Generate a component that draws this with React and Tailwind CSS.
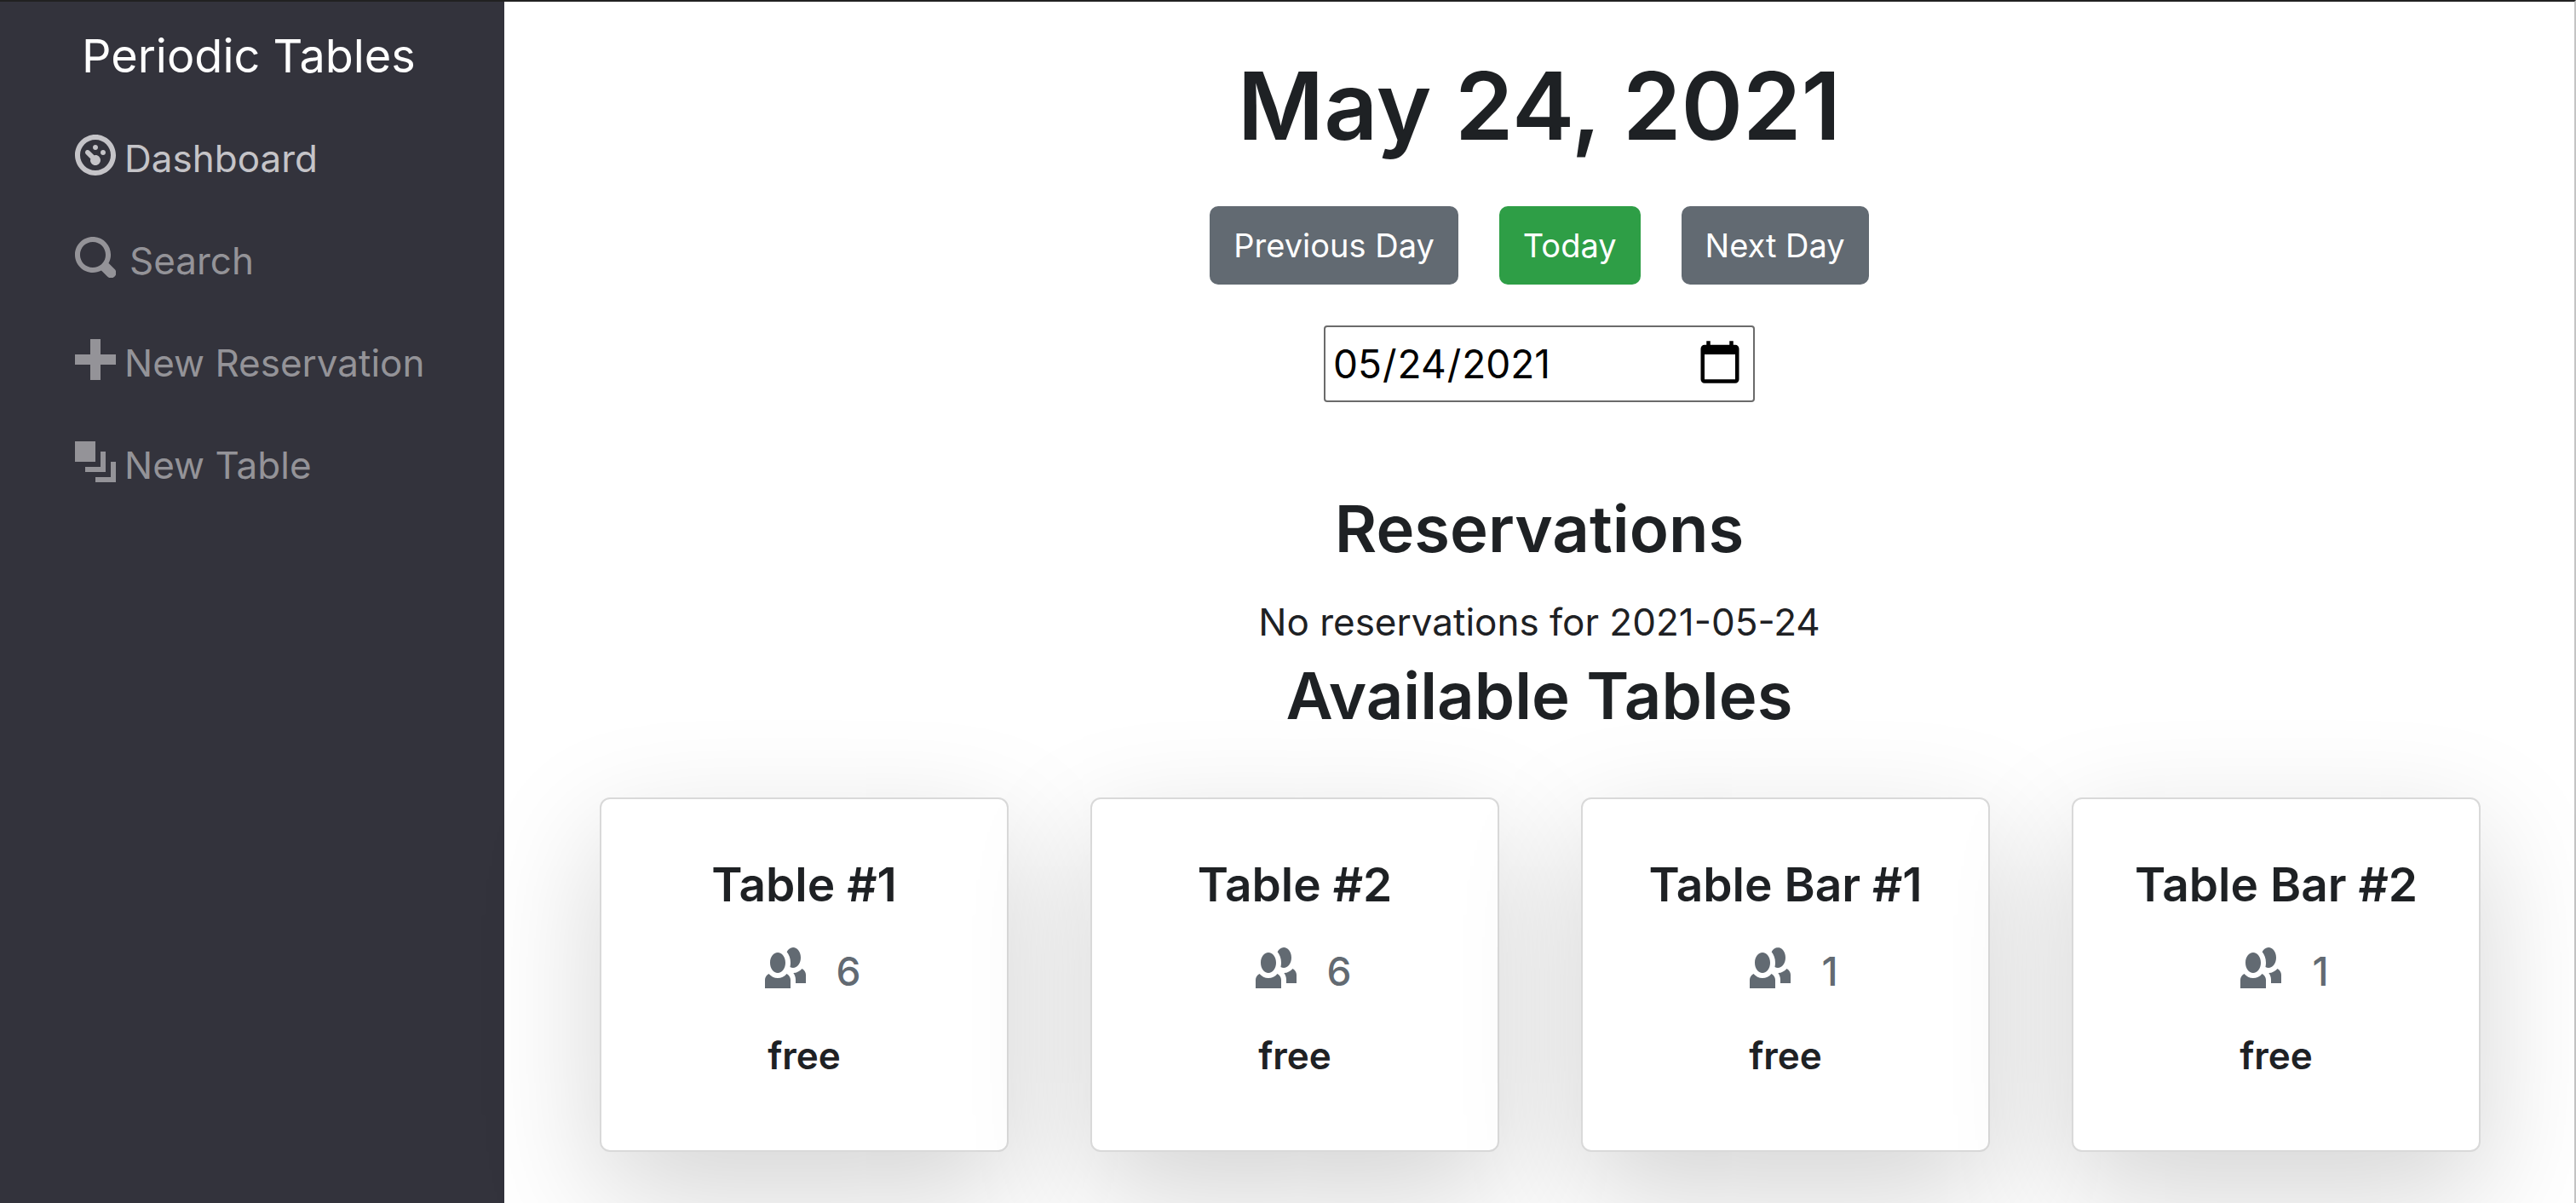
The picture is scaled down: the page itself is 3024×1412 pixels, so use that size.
const icons = {
  dashboard:
    "M4 0c-2.2 0-4 1.8-4 4s1.8 4 4 4 4-1.8 4-4-1.8-4-4-4zm0 1c1.66 0 3 1.34 3 3s-1.34 3-3 3-3-1.34-3-3 1.34-3 3-3zm0 1c-.28 0-.5.22-.5.5s.22.5.5.5.5-.22.5-.5-.22-.5-.5-.5zm-1.66 1a.5.5 0 0 0-.19.84l.91.91c-.02.08-.06.16-.06.25 0 .55.45 1 1 1s1-.45 1-1-.45-1-1-1c-.09 0-.17.04-.25.06l-.91-.91a.5.5 0 0 0-.44-.16.5.5 0 0 0-.06 0zm3.16 0c-.28 0-.5.22-.5.5s.22.5.5.5.5-.22.5-.5-.22-.5-.5-.5z",
  search:
    "M3.5 0c-1.93 0-3.5 1.57-3.5 3.5s1.57 3.5 3.5 3.5c.59 0 1.17-.14 1.66-.41a1 1 0 0 0 .13.13l1 1a1.02 1.02 0 1 0 1.44-1.44l-1-1a1 1 0 0 0-.16-.13c.27-.49.44-1.06.44-1.66 0-1.93-1.55-3.5-3.5-3.5zm0 1c1.39 0 2.5 1.11 2.5 2.5 0 .66-.24 1.27-.66 1.72-.01.01-.02.02-.03.03a1 1 0 0 0-.13.13c-.44.4-1.04.63-1.69.63-1.39 0-2.5-1.11-2.5-2.5s1.11-2.5 2.5-2.5z",
  plus: "M3 0v3h-3v2h3v3h2v-3h3v-2h-3v-3h-2z",
  layers: "M0 0v4h4v-4h-4zm5 2v3h-3v1h4v-4h-1zm2 2v3h-3v1h4v-4h-1z",
  people:
    "M5.5 0c-.51 0-.95.35-1.22.88.45.54.72 1.28.72 2.13 0 .29-.03.55-.09.81.19.11.38.19.59.19.83 0 1.5-.9 1.5-2s-.67-2-1.5-2zm-3 1c-.83 0-1.5.9-1.5 2s.67 2 1.5 2 1.5-.9 1.5-2-.67-2-1.5-2zm4.75 3.16c-.43.51-1.02.82-1.69.84.27.38.44.84.44 1.34v.66h2v-1.66c0-.52-.31-.97-.75-1.19zm-6.5 1c-.44.22-.75.67-.75 1.19v1.66h5v-1.66c0-.52-.31-.97-.75-1.19-.45.53-1.06.84-1.75.84s-1.3-.32-1.75-.84z",
};

function Icon({ name }) {
  return (
    <svg viewBox="0 0 8 8" className="size-12 shrink-0 fill-current" aria-hidden="true">
      <path d={icons[name]} />
    </svg>
  );
}

const links = [
  { icon: "dashboard", label: "Dashboard", style: "gap-2.5 text-[#c5c4c8]" },
  { icon: "search", label: "Search", style: "gap-4 text-[#949398]" },
  { icon: "plus", label: "New Reservation", style: "gap-2.5 text-[#949398]" },
  { icon: "layers", label: "New Table", style: "gap-2.5 text-[#949398]" },
];

const tables = [
  { name: "Table #1", capacity: 6 },
  { name: "Table #2", capacity: 6 },
  { name: "Table Bar #1", capacity: 1 },
  { name: "Table Bar #2", capacity: 1 },
];

function Sidebar() {
  return (
    <nav className="w-[592px] shrink-0 bg-[#33333c]">
      <a href="#home" className="mt-7 block px-24 text-[54px] leading-[72px] whitespace-nowrap text-white">
        Periodic Tables
      </a>
      <ul className="mt-6 px-[88px]">
        {links.map((link) => (
          <li key={link.label}>
            <a href="#nav" className={`flex h-[120px] items-center text-[44px] whitespace-nowrap ${link.style}`}>
              <span className="-mt-2">
                <Icon name={link.icon} />
              </span>
              {link.label}
            </a>
          </li>
        ))}
      </ul>
    </nav>
  );
}

function TableCard({ table }) {
  return (
    <article className="flex h-[416px] flex-col items-center rounded-xl border-2 border-[#d9d9d9] bg-white pt-16 shadow-[0_48px_144px_rgba(0,0,0,0.175)]">
      <h5 className="text-[55px] leading-[72px] font-semibold">{table.name}</h5>
      <div className="mt-9 flex h-[60px] items-center gap-9 pl-5 text-[46px] font-medium text-[#626a72]">
        <span className="-mt-2">
          <Icon name="people" />
        </span>
        {table.capacity}
      </div>
      <p className="mt-10 text-[44px] leading-[58px] font-semibold">free</p>
    </article>
  );
}

export default function App() {
  return (
    <div className="flex min-h-screen border-t-2 border-r-2 border-t-[#212121] border-r-[#c4c4c4] bg-white font-['Inter',sans-serif] text-[#1e2124]">
      <Sidebar />
      <main className="flex min-w-0 grow flex-col items-center">
        <h1 className="mt-[50px] text-[110px] leading-[144px] font-semibold whitespace-nowrap">May 24, 2021</h1>
        <div className="mt-[46px] flex gap-12 text-[38px] text-white">
          <button className="h-[92px] rounded-[10px] bg-[#626a72] px-7">Previous Day</button>
          <button className="h-[92px] rounded-[10px] bg-[#2e9e46] px-7">Today</button>
          <button className="h-[92px] rounded-[10px] bg-[#626a72] px-7">Next Day</button>
        </div>
        <input
          type="date"
          aria-label="Date"
          defaultValue="2021-05-24"
          className="mt-12 h-[90px] w-[506px] rounded-[4px] border-2 border-[#6b6b6b] bg-white px-2 text-[46px] text-black [&::-webkit-calendar-picker-indicator]:size-[58px]"
        />
        <h3 className="mt-[98px] text-[76px] leading-[100px] font-semibold">Reservations</h3>
        <p className="mt-6 text-[44px] leading-[72px]">No reservations for 2021-05-24</p>
        <h3 className="text-[76px] leading-[100px] font-semibold">Available Tables</h3>
        <section className="mt-[70px] grid w-full grid-cols-4 gap-24 pr-[110px] pl-28">
          {tables.map((table) => (
            <TableCard key={table.name} table={table} />
          ))}
        </section>
      </main>
    </div>
  );
}
